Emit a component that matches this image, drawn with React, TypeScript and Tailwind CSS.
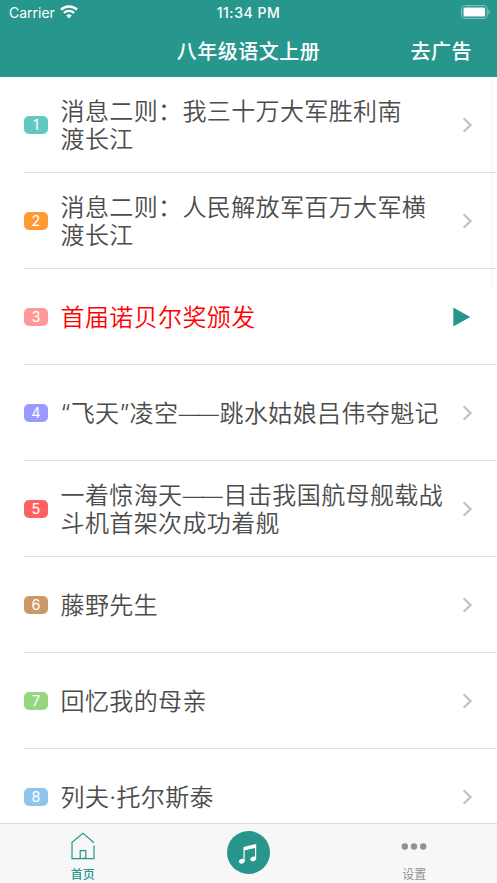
type Lesson = {
  id: number;
  lines: string[];
  badge: string;
  playing?: boolean;
};

const lessons: Lesson[] = [
  { id: 1, lines: ["消息二则：我三十万大军胜利南", "渡长江"], badge: "bg-[#63c8c3]" },
  { id: 2, lines: ["消息二则：人民解放军百万大军横", "渡长江"], badge: "bg-[#ff9933]" },
  { id: 3, lines: ["首届诺贝尔奖颁发"], badge: "bg-[#ff9999]", playing: true },
  { id: 4, lines: ["“飞天”凌空——跳水姑娘吕伟夺魁记"], badge: "bg-[#9999ff]" },
  { id: 5, lines: ["一着惊海天——目击我国航母舰载战", "斗机首架次成功着舰"], badge: "bg-[#ff6161]" },
  { id: 6, lines: ["藤野先生"], badge: "bg-[#cc9966]" },
  { id: 7, lines: ["回忆我的母亲"], badge: "bg-[#95d67e]" },
  { id: 8, lines: ["列夫·托尔斯泰"], badge: "bg-[#8ec5eb]" },
];

function StatusBar() {
  return (
    <div className="grid h-[26px] grid-cols-3 items-center pl-[9px] pr-[6px] text-[14px] leading-none">
      <div className="flex items-center gap-[5px]">
        <span>Carrier</span>
        <svg width="18" height="14" viewBox="0 0 18 14" fill="none" stroke="currentColor" className="-mt-[2px]">
          <path d="M1 4.7a11.4 11.4 0 0 1 16 0" strokeWidth="2.5" />
          <path d="M3.9 7.9a7.2 7.2 0 0 1 10.2 0" strokeWidth="2.3" />
          <path d="M9 13.4 6.2 10.6a4 4 0 0 1 5.6 0Z" fill="currentColor" stroke="none" />
        </svg>
      </div>
      <span className="-ml-[3px] text-center font-medium tracking-[0.55px] whitespace-nowrap">11:34 PM</span>
      <svg className="-mt-[2px] justify-self-end" width="30" height="14" viewBox="0 0 30 14">
        <rect x="0.6" y="0.6" width="25.6" height="12.8" rx="3.4" fill="none" stroke="#fff" strokeOpacity="0.45" />
        <rect x="2.5" y="2.4" width="21.6" height="9.2" rx="1.6" fill="#fff" />
        <path d="M27.6 4.8c1.6.6 1.6 3.8 0 4.4Z" fill="#fff" fillOpacity="0.5" />
      </svg>
    </div>
  );
}

// Tightens the double dash so that it draws as one continuous stroke
function LessonLine({ text }: { text: string }) {
  const [before, after] = text.split("——");
  return (
    <p>
      {before}
      {after && <span className="mr-[3px] ml-[0.4px] text-[21px] leading-none tracking-[-2.1px]">——</span>}
      {after}
    </p>
  );
}

function LessonRow({ lesson }: { lesson: Lesson }) {
  return (
    <li className="ml-6 flex h-24 shrink-0 items-center border-b border-[#e2e2e4]">
      <span
        className={`flex h-[18px] w-6 shrink-0 items-center justify-center rounded-[5px] pt-px text-[14.5px] leading-none text-white ${lesson.badge}`}
      >
        {lesson.id}
      </span>
      <div
        className={`ml-[12.5px] flex-1 pt-[2px] text-[24px] leading-[28px] font-[350] tracking-[0.38px] whitespace-nowrap ${
          lesson.playing ? "text-[#ff0000]" : "text-[#4c4c4c]"
        }`}
      >
        {lesson.lines.map((line) => (
          <LessonLine key={line} text={line} />
        ))}
      </div>
      {lesson.playing ? (
        <svg className="mr-[26px]" width="18" height="20" viewBox="0 0 18 20">
          <path d="M0.3 0.5 17.3 10 0.3 19.5Z" fill="#27978d" />
        </svg>
      ) : (
        <svg className="mr-[24px]" width="11" height="16" viewBox="0 0 11 16" fill="none" stroke="#c4c4c7" strokeWidth="2.3">
          <path d="m1.7 1.3 6.9 6.7-6.9 6.7" />
        </svg>
      )}
    </li>
  );
}

function TabBar() {
  return (
    <nav className="grid h-[60px] shrink-0 grid-cols-3 border-t border-[#d9dcdc] bg-[#f7f7f7] text-[12px] leading-[14px]">
      <div className="flex flex-col items-center pt-[8px] text-[#27978d]">
        <svg width="24" height="28" viewBox="0 0 24 28" fill="none" stroke="currentColor" strokeWidth="1.2">
          <path d="M23 10.7 12 1.2 1 10.3V26.7h22V13.6" />
          <path d="M9.2 26.3v-7.6h5.6v7.3h-2.2" />
        </svg>
        <span className="mt-[8px] font-medium">首页</span>
      </div>
      <div className="flex justify-center pt-[7px]">
        <div className="flex size-[43px] items-center justify-center rounded-full bg-[#27978d]">
          <svg width="20" height="22" viewBox="0 0 20 22">
            <path d="M5.5 4.9 18.2 2v15H17V6L6.7 8.3V19.4H5.5Z" fill="#fff" />
            <ellipse cx="3.8" cy="19.2" rx="2.9" ry="2.3" fill="#fff" transform="rotate(-18 3.8 19.2)" />
            <ellipse cx="15.2" cy="16.9" rx="2.9" ry="2.3" fill="#fff" transform="rotate(-18 15.2 16.9)" />
          </svg>
        </div>
      </div>
      <div className="flex flex-col items-center pt-[19px] text-[#929292]">
        <svg width="26" height="7" viewBox="0 0 26 7" fill="currentColor">
          <circle cx="3.8" cy="3.5" r="3.2" />
          <circle cx="13" cy="3.5" r="3.2" />
          <circle cx="22.2" cy="3.5" r="3.2" />
        </svg>
        <span className="mt-[18px]">设置</span>
      </div>
    </nav>
  );
}

export default function App() {
  return (
    <div className="flex h-[883px] w-[497px] flex-col overflow-hidden bg-white font-['Inter','Noto_Sans_CJK_SC',sans-serif]">
      <header className="h-[77px] shrink-0 bg-[#27978d] text-white">
        <StatusBar />
        <div className="grid h-[51px] grid-cols-3 items-center text-[20px] font-medium tracking-[0.5px] whitespace-nowrap">
          <h1 className="col-start-2 text-center">八年级语文上册</h1>
          <button className="justify-self-end pr-[25px]">去广告</button>
        </div>
      </header>

      <main className="relative min-h-0 flex-1 overflow-hidden">
        <ul className="flex flex-col">
          {lessons.map((lesson) => (
            <LessonRow key={lesson.id} lesson={lesson} />
          ))}
        </ul>
        {/* scroll indicator */}
        <div className="absolute top-[3px] right-1 h-[210px] w-[3px] rounded-full bg-black/[0.025]" />
      </main>

      <TabBar />
    </div>
  );
}
